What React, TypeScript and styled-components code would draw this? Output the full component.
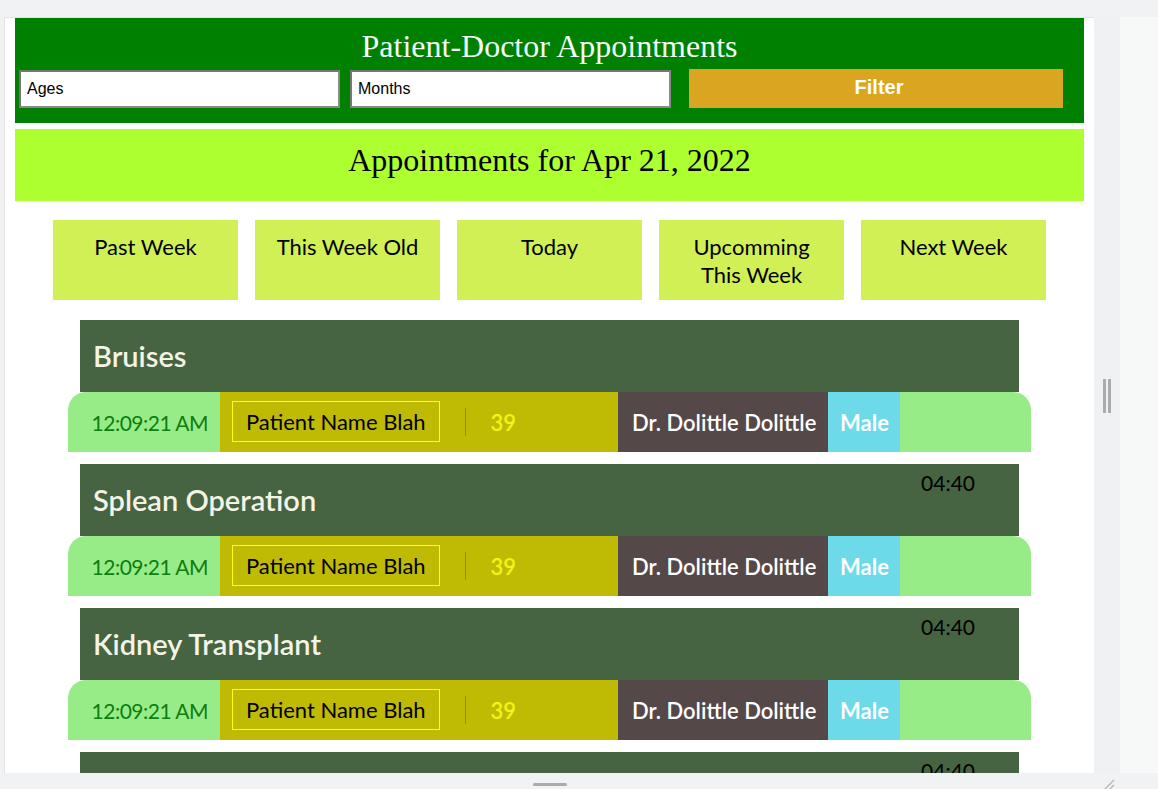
import styled, { createGlobalStyle } from "styled-components";

const GlobalStyle = createGlobalStyle`
  html, body {
    margin: 0;
    padding: 0;
    background: #f1f2f4;
  }
  * {
    box-sizing: border-box;
  }
`;

const tabs = ["Past Week", "This Week Old", "Today", "Upcomming This Week", "Next Week"];

const appointments = [
  { title: "Bruises", duration: "" },
  { title: "Splean Operation", duration: "04:40" },
  { title: "Kidney Transplant", duration: "04:40" },
  { title: "Checkup", duration: "04:40" },
];

const App = () => {
  return (
    <>
      <GlobalStyle />
      <Shell>
        <Workspace>
          <Frame>
            <Header>
              <Title>Patient-Doctor Appointments</Title>
              <FilterRow>
                <TextInput defaultValue="Ages" />
                <TextInput defaultValue="Months" />
                <FilterButton>Filter</FilterButton>
              </FilterRow>
            </Header>

            <DateBanner>Appointments for Apr 21, 2022</DateBanner>

            <TabRow>
              {tabs.map((t) => (
                <Tab key={t}>{t}</Tab>
              ))}
            </TabRow>

            <CardList>
              {appointments.map((a, i) => (
                <Card key={i}>
                  <CardHeader>
                    <CardTitle>{a.title}</CardTitle>
                    {a.duration && <Duration>{a.duration}</Duration>}
                  </CardHeader>
                  <DetailRow>
                    <TimeCell>12:09:21 AM</TimeCell>
                    <PatientCell>
                      <PatientName>Patient Name Blah</PatientName>
                      <Divider />
                      <Age>39</Age>
                    </PatientCell>
                    <DoctorCell>Dr. Dolittle Dolittle</DoctorCell>
                    <GenderCell>Male</GenderCell>
                    <Filler />
                  </DetailRow>
                </Card>
              ))}
            </CardList>
          </Frame>
          <SideGrip>
            <GripBars />
          </SideGrip>
          <SideRest />
        </Workspace>
        <BottomStrip>
          <BottomHandle />
          <CornerHandle>
            <svg width="14" height="14" viewBox="0 0 14 14">
              <path d="M13 3 L3 13 M13 8 L8 13" stroke="#b5b7ba" strokeWidth="1.4" />
            </svg>
          </CornerHandle>
        </BottomStrip>
      </Shell>
    </>
  );
};

export default App;

const Shell = styled.div`
  width: 1158px;
  height: 789px;
  padding-top: 17px;
  display: flex;
  flex-direction: column;
  overflow: hidden;
  background: #f1f2f4;
`;

const Workspace = styled.div`
  display: flex;
  height: 756px;
  padding-left: 4px;
`;

const Frame = styled.div`
  width: 1090px;
  height: 756px;
  background: #ffffff;
  border-top: 1px solid #e2e3e5;
  border-left: 1px solid #e2e3e5;
  padding: 0 10px;
  overflow: hidden;
`;

const SideGrip = styled.div`
  width: 26px;
  display: flex;
  align-items: center;
  justify-content: center;
  background: #f0f1f3;
`;

const GripBars = styled.div`
  width: 8px;
  height: 34px;
  border-left: 3px solid #a9abae;
  border-right: 3px solid #a9abae;
  margin-top: 2px;
`;

const SideRest = styled.div`
  flex: 1;
  background: #f7f8f8;
`;

const BottomStrip = styled.div`
  position: relative;
  height: 16px;
  display: flex;
  align-items: flex-end;
  padding-left: 533px;
  padding-bottom: 3px;
`;

const BottomHandle = styled.div`
  width: 34px;
  height: 3px;
  background: #a9abae;
  border-radius: 2px;
`;

const CornerHandle = styled.div`
  position: absolute;
  left: 1101px;
  bottom: -2px;
  display: flex;
`;

const Header = styled.header`
  height: 105px;
  background: #008000;
  padding-top: 9px;
`;

const Title = styled.h1`
  margin: 0;
  font-family: "Liberation Serif", "DejaVu Serif", serif;
  font-weight: normal;
  font-size: 32px;
  line-height: 38px;
  color: #f0fff8;
  text-align: center;
`;

const FilterRow = styled.div`
  display: flex;
  align-items: center;
  padding-left: 4px;
  margin-top: 4px;
`;

const TextInput = styled.input`
  width: 321px;
  height: 38px;
  margin-right: 10px;
  border: 2px solid #8a8a8a;
  border-top-color: #767676;
  border-left-color: #767676;
  padding: 0 6px;
  font-family: "Liberation Sans", Arial, sans-serif;
  font-size: 16px;
  color: #000000;
  background: #ffffff;
  outline: none;

  & + & {
    margin-right: 18px;
  }
`;

const FilterButton = styled.button`
  width: 374px;
  height: 39px;
  border: none;
  background: #daa520;
  color: #ffffff;
  font-family: "Liberation Sans", Arial, sans-serif;
  font-weight: bold;
  font-size: 20px;
  padding: 0 0 2px 6px;
`;

const DateBanner = styled.div`
  margin-top: 6px;
  height: 72px;
  background: #adff2f;
  font-family: "Liberation Serif", "DejaVu Serif", serif;
  font-size: 32px;
  line-height: 62px;
  color: #000000;
  text-align: center;
`;

const TabRow = styled.div`
  display: flex;
  justify-content: center;
  gap: 17px;
  margin-top: 19px;
`;

const Tab = styled.div`
  width: 185px;
  height: 80px;
  background: #d1f056;
  padding: 13px 16px 0;
  font-family: Lato, "Open Sans", sans-serif;
  font-size: 22px;
  line-height: 28px;
  color: #000000;
  text-align: center;
`;

const CardList = styled.div`
  display: flex;
  flex-direction: column;
  align-items: center;
  gap: 12px;
  margin-top: 20px;
`;

const Card = styled.div`
  width: 963px;
  display: flex;
  flex-direction: column;
  align-items: center;
`;

const CardHeader = styled.div`
  position: relative;
  width: 939px;
  height: 72px;
  background: #466441;
  display: flex;
  align-items: center;
  padding-left: 13px;
  padding-bottom: 2px;
`;

const CardTitle = styled.h2`
  margin: 0;
  font-family: Lato, "Open Sans", sans-serif;
  font-weight: 600;
  font-size: 29px;
  color: #f3f3e6;
`;

const Duration = styled.span`
  position: absolute;
  top: 6px;
  right: 44px;
  font-family: Lato, "Open Sans", sans-serif;
  font-size: 21px;
  color: #000000;
`;

const DetailRow = styled.div`
  width: 963px;
  height: 60px;
  display: flex;
  align-items: stretch;
  border-radius: 18px 18px 0 0;
  overflow: hidden;
  background: #98ec88;
  font-family: Lato, "Open Sans", sans-serif;
  font-size: 22px;
`;

const Cell = styled.div`
  display: flex;
  align-items: center;
`;

const TimeCell = styled(Cell)`
  width: 152px;
  justify-content: flex-end;
  padding-right: 12px;
  font-size: 21px;
  letter-spacing: -0.5px;
  color: #0e7d12;
`;

const PatientCell = styled(Cell)`
  width: 398px;
  background: #bfbb05;
  padding-left: 12px;
`;

const PatientName = styled.div`
  height: 41px;
  display: flex;
  align-items: center;
  padding: 0 13px;
  border: 1px solid #ffff00;
  color: #000000;
  margin-bottom: 1px;
  white-space: nowrap;
`;

const Divider = styled.div`
  width: 1px;
  height: 28px;
  background: #6d9a3e;
  margin-left: 25px;
`;

const Age = styled.span`
  margin-left: 25px;
  color: #f4f412;
  font-weight: 600;
`;

const DoctorCell = styled(Cell)`
  width: 210px;
  background: #554848;
  padding-left: 14px;
  color: #ffffff;
  font-weight: 600;
  white-space: nowrap;
`;

const GenderCell = styled(Cell)`
  width: 72px;
  background: #6cdae9;
  padding-left: 12px;
  color: #ffffff;
  font-weight: bold;
`;

const Filler = styled.div`
  flex: 1;
`;
